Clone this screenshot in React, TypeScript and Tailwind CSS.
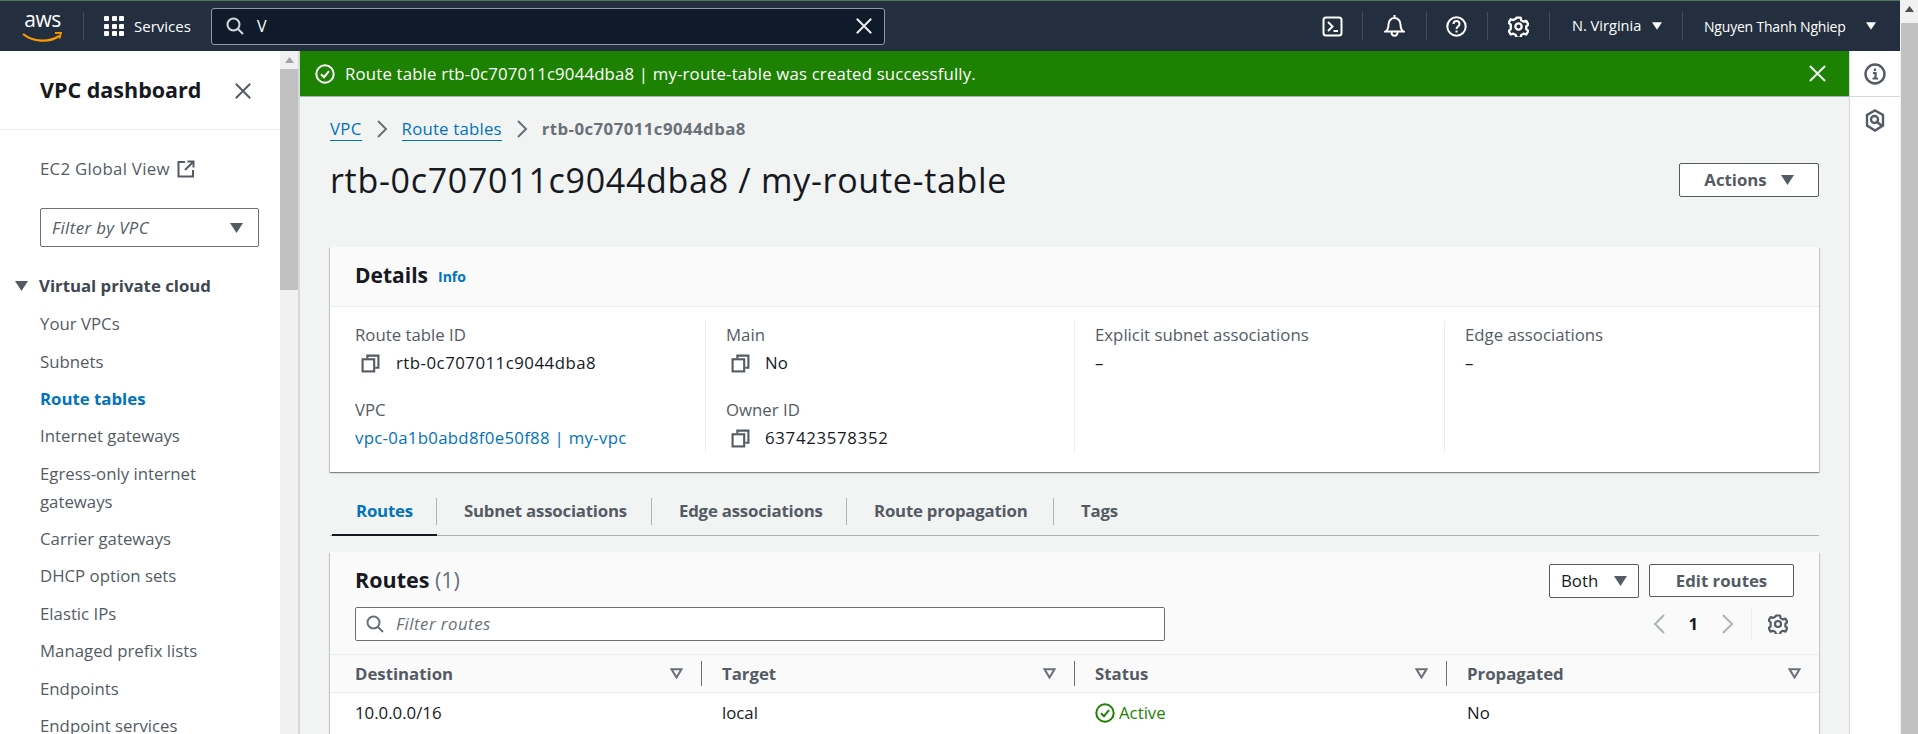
import { ReactNode } from 'react'

const NAV_ITEMS = ['Your VPCs', 'Subnets', 'Route tables', 'Internet gateways', 'Egress-only internet gateways', 'Carrier gateways', 'DHCP option sets', 'Elastic IPs', 'Managed prefix lists', 'Endpoints', 'Endpoint services']

const TABS = [
  { label: 'Routes', width: 'w-[107px]' },
  { label: 'Subnet associations', width: 'w-[215px]' },
  { label: 'Edge associations', width: 'w-[195px]' },
  { label: 'Route propagation', width: 'w-[207px]' },
  { label: 'Tags', width: 'w-[100px]' },
]

const COLUMNS = [
  { label: 'Destination', width: 'w-[347px]' },
  { label: 'Target', width: 'w-[373px]' },
  { label: 'Status', width: 'w-[372px]' },
  { label: 'Propagated', width: 'w-[354px]' },
]

function Caret({ className = 'text-[#545b64]', small = false }: { className?: string; small?: boolean }) {
  return (
    <svg width={small ? 10 : 13} height={small ? 8 : 10} viewBox="0 0 13 10" className={`shrink-0 ${className}`}>
      <path d="M0 0h13L6.500 10z" fill="currentColor" />
    </svg>
  )
}

function CopyIcon() {
  return (
    <svg width="19" height="19" viewBox="0 0 18 18" fill="none" stroke="#545b64" strokeWidth="2" className="shrink-0">
      <path d="M6 4V1.500h10.500V13H13.500" />
      <rect x="1.500" y="5" width="11" height="11.500" />
    </svg>
  )
}

function CloseIcon({ size = 20, color = '#545b64' }: { size?: number; color?: string }) {
  return (
    <svg width={size} height={size} viewBox="0 0 20 20" fill="none" stroke={color} strokeWidth="2.200" className="shrink-0">
      <path d="M2 2l16 16M18 2L2 18" />
    </svg>
  )
}

function CheckCircle({ color, size = 20 }: { color: string; size?: number }) {
  return (
    <svg width={size} height={size} viewBox="0 0 20 20" fill="none" stroke={color} strokeWidth="2" className="shrink-0">
      <circle cx="10" cy="10" r="8.700" />
      <path d="M6 10.200l3 3 5-6" />
    </svg>
  )
}

function Gear({ color = 'white', size = 20 }: { color?: string; size?: number }) {
  return (
    <svg width={size} height={size} viewBox="0 0 20 20" fill="none" stroke={color} strokeWidth="2.200" strokeLinejoin="round" className="shrink-0">
      <path d="M8 1.500h4l.6 2.600 2.300 1.300 2.500-.8 2 3.400-2 1.800v2.600l2 1.800-2 3.400-2.500-.8-2.300 1.300-.6 2.600H8l-.6-2.600-2.300-1.300-2.500.8-2-3.400 2-1.800V8.300l-2-1.800 2-3.400 2.500.8 2.300-1.300z" />
      <circle cx="10" cy="10" r="3" />
    </svg>
  )
}

function SearchIcon({ color, size = 18 }: { color: string; size?: number }) {
  return (
    <svg width={size} height={size} viewBox="0 0 18 18" fill="none" stroke={color} strokeWidth="2" className="shrink-0">
      <circle cx="7.500" cy="7.500" r="6" />
      <path d="M12 12l5 5" />
    </svg>
  )
}

function SortIcon() {
  return (
    <svg width="13" height="11" viewBox="0 0 13 11" fill="none" stroke="#687078" strokeWidth="2" className="shrink-0">
      <path d="M1.500 1.200h10L6.500 9.500z" />
    </svg>
  )
}

function HeaderDivider({ className = '' }: { className?: string }) {
  return <div className={`h-7 w-px shrink-0 bg-[#414d5c] ${className}`} />
}

function Field({ label, children, className = '' }: { label: string; children: ReactNode; className?: string }) {
  return (
    <div className={className}>
      <div className="h-[28px] leading-[28px] text-[#545b64]">{label}</div>
      <div className="flex h-[28px] items-center leading-[28px]">{children}</div>
    </div>
  )
}

function BreadcrumbChevron() {
  return (
    <svg width="12" height="18" viewBox="0 0 12 18" fill="none" stroke="#687078" strokeWidth="2" className="mx-[14px]">
      <path d="M2 1l8 8-8 8" />
    </svg>
  )
}

function TopBar() {
  return (
    <header className="flex h-[51px] shrink-0 items-center border-t border-[#4b7a5a] bg-[#232f3e] text-white">
      <div className="relative ml-[22px] h-[38px] w-[41px] shrink-0">
        <span className="block text-center text-[21px] leading-[24px] tracking-tight">aws</span>
        <svg width="41" height="12" viewBox="0 0 41 12" fill="none" className="absolute top-[25px] left-0">
          <path d="M1 2c10 8 26 9 36 2" stroke="#ff9900" strokeWidth="2.200" />
          <path d="M33 1l6-.5-1.500 6" stroke="#ff9900" strokeWidth="1.800" />
        </svg>
      </div>
      <HeaderDivider className="ml-[20px]" />
      <div className="ml-[20px] grid w-[20px] shrink-0 grid-cols-3 gap-[2.500px]">
        {Array.from({ length: 9 }).map((_, i) => <div key={i} className="h-[5px] rounded-[1px] bg-white" />)}
      </div>
      <span className="ml-[10px] w-[77px] shrink-0 text-[15px] font-medium">Services</span>
      <div className="flex h-[37px] w-[674px] shrink-0 items-center rounded-[3px] border border-[#8d99a8] bg-[#0f1b2a] pr-[11px] pl-[14px]">
        <SearchIcon color="#d5dbdb" size={18} />
        <span className="ml-[13px] flex-1 text-[16px]">V</span>
        <CloseIcon size={18} color="#eaeded" />
      </div>
      <div className="ml-[437px] flex items-center">
        <svg width="21" height="21" viewBox="0 0 21 21" fill="none" stroke="white" strokeWidth="2" className="shrink-0">
          <rect x="1.500" y="1.500" width="18" height="18" rx="2.500" />
          <path d="M6 6l4.500 4.500L6 15M11.500 15H16" />
        </svg>
        <HeaderDivider className="ml-[19px]" />
        <svg width="21" height="22" viewBox="0 0 21 22" fill="none" stroke="white" strokeWidth="2" className="ml-[21px] shrink-0">
          <path d="M1.500 16.500h18c-3-2-3-4-3-7 0-4-3-6.500-6-6.500s-6 2.500-6 6.500c0 3 0 5-3 7z" />
          <path d="M10.500 0v3M7.500 17c0 5 6 5 6 0" />
        </svg>
        <HeaderDivider className="ml-[21px]" />
        <svg width="21" height="21" viewBox="0 0 21 21" fill="none" stroke="white" strokeWidth="2" className="ml-[19px] shrink-0">
          <circle cx="10.500" cy="10.500" r="9.200" />
          <path d="M7.500 8c0-4 6-4 6 0 0 2.500-3 2.500-3 5" />
          <path d="M10.500 14.500v2" />
        </svg>
        <HeaderDivider className="ml-[20px]" />
        <div className="ml-[20px]"><Gear size={21} /></div>
        <HeaderDivider className="ml-[20px]" />
        <span className="ml-[22px] w-[74px] text-[14.600px] font-medium whitespace-nowrap">N. Virginia</span>
        <Caret small className="ml-[6px] text-white" />
        <HeaderDivider className="ml-[20px]" />
        <span className="ml-[21px] w-[158px] text-[14px] font-medium tracking-[-0.2px] whitespace-nowrap">Nguyen Thanh Nghiep</span>
        <Caret small className="ml-[4px] text-white" />
      </div>
    </header>
  )
}

function Sidebar() {
  return (
    <aside className="flex w-[300px] shrink-0 overflow-hidden border-r-2 border-[#d5dbdb] bg-white">
      <div className="w-[280px] shrink-0">
        <div className="flex h-[79px] items-center justify-between border-b border-[#eaeded] pt-[1px] pr-[28px] pl-[40px]">
          <span className="text-[21.500px] font-bold text-[#16191f]">VPC dashboard</span>
          <CloseIcon size={18} />
        </div>
        <div className="mt-[25px] flex items-center pl-[40px] text-[#545b64]">
          <span className="leading-[28px] tracking-[0.3px]">EC2 Global View</span>
          <svg width="18" height="18" viewBox="0 0 18 18" fill="none" stroke="#545b64" strokeWidth="2" className="ml-[7px]">
            <path d="M8 2H1.500v14.500H16V10M10.500 1.500H16.500V7.500M16 2L8 10" />
          </svg>
        </div>
        <div className="mt-[25px] ml-[40px] flex h-[39px] w-[219px] items-center justify-between rounded-[2px] border border-[#687078] pr-[15px] pl-[11px]">
          <span className="tracking-[0.4px] text-[#545b64] italic">Filter by VPC</span>
          <Caret />
        </div>
        <div className="mt-[25px] flex h-[28px] items-center pl-[15px] font-bold text-[#414750]">
          <Caret />
          <span className="ml-[11px]">Virtual private cloud</span>
        </div>
        <ul className="mt-[5.500px] pr-[10px] pl-[40px] text-[#545b64]">
          {NAV_ITEMS.map(item => (
            <li key={item} className={`py-[4.700px] leading-[28px] ${item === 'Route tables' ? 'font-bold text-[#0073bb]' : ''}`}>{item}</li>
          ))}
        </ul>
      </div>
      <div className="w-[18px] shrink-0 bg-[#f1f1f1]">
        <div className="flex h-[17px] items-center justify-center">
          <svg width="9" height="6" viewBox="0 0 9 6"><path d="M0 6l4.500-6L9 6z" fill="#a3a3a3" /></svg>
        </div>
        <div className="mt-[1px] h-[221px] bg-[#c1c1c1]" />
      </div>
    </aside>
  )
}

function DetailsCard() {
  return (
    <section className="mt-[50px] h-[225px] bg-white shadow-[0_1px_1px_0_rgba(0,28,36,0.3),1px_1px_1px_0_rgba(0,28,36,0.15),-1px_1px_1px_0_rgba(0,28,36,0.15)]">
      <div className="flex h-[60px] items-center border-b border-[#eaeded] bg-[#fafafa] pb-[1px] pl-[25px]">
        <span className="text-[21px] font-bold text-[#16191f]">Details</span>
        <span className="ml-[10px] text-[14px] font-bold text-[#0073bb]">Info</span>
      </div>
      <div className="mt-[14px] grid h-[131px] grid-cols-[375px_369px_370px_375px] text-[#16191f]">
        <div className="pl-[25px]">
          <Field label="Route table ID" className="h-[75px]">
            <span className="ml-[6px] flex items-center"><CopyIcon /><span className="ml-[16px] tracking-[0.5px]">rtb-0c707011c9044dba8</span></span>
          </Field>
          <Field label="VPC"><span className="tracking-[0.3px] text-[#0073bb]">vpc-0a1b0abd8f0e50f88 | my-vpc</span></Field>
        </div>
        <div className="border-l border-[#eaeded] pl-[20px]">
          <Field label="Main" className="h-[75px]">
            <span className="ml-[5px] flex items-center"><CopyIcon /><span className="ml-[15px]">No</span></span>
          </Field>
          <Field label="Owner ID">
            <span className="ml-[5px] flex items-center"><CopyIcon /><span className="ml-[15px] tracking-[0.7px]">637423578352</span></span>
          </Field>
        </div>
        <div className="border-l border-[#eaeded] pl-[20px]">
          <Field label="Explicit subnet associations"><span>–</span></Field>
        </div>
        <div className="border-l border-[#eaeded] pl-[20px]">
          <Field label="Edge associations"><span>–</span></Field>
        </div>
      </div>
    </section>
  )
}

function Tabs() {
  return (
    <div className="mt-[26px] flex h-[38px] border-b border-[#aab7b8] font-bold tracking-[-0.2px] text-[#545b64]">
      {TABS.map((tab, i) => (
        <div key={tab.label} className={`relative flex h-[37px] items-start ${tab.width} ${i === 0 ? 'pl-[26px] text-[#0073bb]' : 'pl-[27px]'}`}>
          <span className="leading-[26px] whitespace-nowrap">{tab.label}</span>
          {i < TABS.length - 1 && <div className="absolute top-0 right-0 h-[27px] w-px bg-[#aab7b8]" />}
          {i === 0 && <div className="absolute right-0 bottom-[-1px] left-[2px] h-[2px] bg-[#16191f]" />}
        </div>
      ))}
    </div>
  )
}

function RoutesCard() {
  return (
    <section className="mt-[16px] bg-white shadow-[0_1px_1px_0_rgba(0,28,36,0.3),1px_1px_1px_0_rgba(0,28,36,0.15),-1px_1px_1px_0_rgba(0,28,36,0.15)]">
      <div className="h-[103px] border-b border-[#eaeded] bg-[#fafafa]">
        <div className="flex h-[54px] items-start pt-[12px] pr-[25px] pl-[25px]">
          <span className="mt-[1px] text-[21.500px] leading-[30px] font-bold text-[#16191f]">Routes <span className="font-normal text-[#687078]">(1)</span></span>
          <div className="ml-auto flex h-[34px] w-[90px] items-center justify-between rounded-[2px] border border-[#545b64] bg-white pr-[11px] pl-[11px] text-[#16191f]">
            Both <Caret />
          </div>
          <div className="ml-[10px] flex h-[33px] w-[145px] items-center justify-center rounded-[2px] border border-[#545b64] bg-white font-bold text-[#545b64]">
            Edit routes
          </div>
        </div>
        <div className="flex h-[35px] items-center pr-[31px] pl-[25px]">
          <div className="flex h-[34px] w-[810px] items-center rounded-[2px] border border-[#687078] bg-white pl-[10px]">
            <SearchIcon color="#687078" size={18} />
            <span className="ml-[12px] tracking-[0.5px] text-[#687078] italic">Filter routes</span>
          </div>
          <svg width="12" height="20" viewBox="0 0 12 20" fill="none" stroke="#aab7b8" strokeWidth="2" className="ml-auto">
            <path d="M11 1L2 10l9 9" />
          </svg>
          <span className="ml-[23px] font-bold text-[#16191f]">1</span>
          <svg width="12" height="20" viewBox="0 0 12 20" fill="none" stroke="#aab7b8" strokeWidth="2" className="ml-[24px]">
            <path d="M1 1l9 9-9 9" />
          </svg>
          <div className="ml-[17px] h-[34px] w-px bg-[#eaeded]" />
          <div className="ml-[16px]"><Gear color="#545b64" /></div>
        </div>
      </div>
      <div className="flex h-[38px] items-center border-b border-[#eaeded] bg-[#fafafa] pl-[25px] font-bold text-[#545b64]">
        {COLUMNS.map((col, i) => (
          <div key={col.label} className={`flex h-[25px] shrink-0 items-center ${col.width}`}>
            <span className={i === 0 ? '' : 'pl-[20px]'}>{col.label}</span>
            <div className="ml-auto flex items-center">
              <SortIcon />
              {i < COLUMNS.length - 1 && <div className="ml-[18px] h-[25px] w-px bg-[#687078]" />}
            </div>
          </div>
        ))}
      </div>
      <div className="flex h-[60px] items-start pt-[6px] pl-[25px] leading-[28px] text-[#16191f]">
        <span className="w-[347px]">10.0.0.0/16</span>
        <span className="w-[373px] pl-[20px]">local</span>
        <span className="flex w-[372px] items-center pl-[20px] text-[#1d8102]"><CheckCircle color="#1d8102" /><span className="ml-[4px]">Active</span></span>
        <span className="pl-[20px]">No</span>
      </div>
    </section>
  )
}

export default function App() {
  return (
    <div className="flex h-[734px] w-full overflow-hidden bg-white text-[16.800px] text-[#16191f] [font-family:'Open_Sans',sans-serif]">
      <div className="flex w-[1900px] shrink-0 flex-col">
        <TopBar />
        <div className="flex min-h-0 flex-1">
          <Sidebar />
          <main className="w-[1549px] shrink-0 overflow-hidden bg-[#f2f3f3]">
            <div className="flex h-[46px] items-center justify-between border-b border-[#aab7b8] bg-[#1d8102] pr-[22px] pl-[15px] text-white">
              <div className="flex items-center">
                <CheckCircle color="white" />
                <span className="ml-[10px] tracking-[0.17px]">Route table rtb-0c707011c9044dba8 | my-route-table was created successfully.</span>
              </div>
              <CloseIcon size={19} color="#eaeded" />
            </div>
            <div className="px-[30px]">
              <div className="mt-[18px] flex h-[28px] items-center">
                <span className="border-b border-[#0073bb] leading-[22px] tracking-[0.3px] text-[#0073bb]">VPC</span>
                <BreadcrumbChevron />
                <span className="border-b border-[#0073bb] leading-[22px] tracking-[0.2px] text-[#0073bb]">Route tables</span>
                <BreadcrumbChevron />
                <span className="font-bold tracking-[0.45px] text-[#687078]">rtb-0c707011c9044dba8</span>
              </div>
              <div className="mt-[20px] flex h-[34px] items-center justify-between">
                <h1 className="text-[34px] leading-[40px] tracking-[0.7px] text-[#16191f]">rtb-0c707011c9044dba8 / my-route-table</h1>
                <div className="flex h-[34px] w-[140px] items-center justify-center rounded-[2px] border border-[#545b64] bg-white font-bold text-[#545b64]">
                  Actions <Caret className="ml-[14px] text-[#545b64]" />
                </div>
              </div>
              <DetailsCard />
              <Tabs />
              <RoutesCard />
            </div>
          </main>
          <aside className="w-[51px] shrink-0 border-l border-[#d5dbdb] bg-white">
            <div className="flex h-[46px] items-center justify-center border-b border-[#d5dbdb]">
              <svg width="22" height="22" viewBox="0 0 22 22" fill="none" stroke="#545b64" strokeWidth="2.400">
                <circle cx="11" cy="11" r="9.500" />
                <path d="M11 5.500v2.500M9 10h2.500v5.500M8.500 15.500h5.500" strokeWidth="2.200" />
              </svg>
            </div>
            <div className="flex h-[46px] items-center justify-center">
              <svg width="20" height="23" viewBox="0 0 20 23" fill="none" stroke="#545b64" strokeWidth="2.400">
                <path d="M10 1.500l8 4.500v10.500l-8 5-8-5V6z" />
                <circle cx="9.500" cy="10.500" r="3.500" />
                <path d="M11.500 12.500l5 4" />
              </svg>
            </div>
          </aside>
        </div>
      </div>
      <div className="w-[18px] shrink-0 bg-[#f1f1f1]">
        <div className="flex h-[17px] items-center justify-center">
          <svg width="9" height="6" viewBox="0 0 9 6"><path d="M0 6l4.500-6L9 6z" fill="#505050" /></svg>
        </div>
        <div className="mt-[6px] ml-[1px] h-[711px] bg-[#c1c1c1]" />
      </div>
    </div>
  )
}
